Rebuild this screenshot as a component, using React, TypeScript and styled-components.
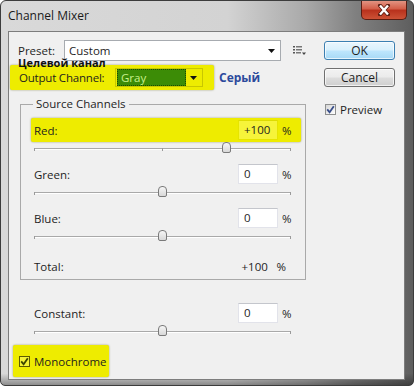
import styled, { createGlobalStyle } from "styled-components";

const GlobalStyle = createGlobalStyle`
  html, body {
    margin: 0;
    padding: 0;
  }
  body {
    width: 414px;
    height: 386px;
    overflow: hidden;
    background: #ffffff;
    font-family: "Open Sans", "Noto Sans", sans-serif;
    font-size: 11.5px;
    color: #1e1e1e;
  }
`;

const Window = styled.div`
  box-sizing: border-box;
  width: 414px;
  height: 386px;
  display: flex;
  flex-direction: column;
  border: 1px solid #3c3c3c;
  border-radius: 6px 6px 5px 5px;
  overflow: hidden;
  background:
    linear-gradient(180deg, rgba(0, 0, 0, 0) 97%, rgba(0, 0, 0, 0.35) 100%),
    linear-gradient(90deg, #d9d9d9 0%, #d3d3d3 55%, #a9a9a9 74%, #808080 86%, #5e5e5e 100%);
`;

const TitleBar = styled.div`
  height: 30px;
  flex-shrink: 0;
  display: flex;
  align-items: flex-start;
  justify-content: space-between;
  padding: 0 6px 0 7px;
`;

const Title = styled.span`
  line-height: 30px;
  font-size: 12px;
  color: #1a1a1a;
`;

const CloseButton = styled.div`
  box-sizing: border-box;
  width: 46px;
  height: 20px;
  margin-top: -1px;
  display: flex;
  align-items: center;
  justify-content: center;
  border: 1px solid #5b1d12;
  border-top: none;
  border-radius: 0 0 5px 5px;
  background: linear-gradient(180deg, #e49a89 0%, #d4604a 45%, #b9321d 55%, #cc5236 100%);
`;

const Client = styled.div`
  flex: 1;
  margin: 0 8px 5px 7px;
  border: 1px solid #7d7d7d;
  background: #f0f0f0;
  display: flex;
`;

const LeftPane = styled.div`
  width: 315px;
  display: flex;
  flex-direction: column;
`;

const RightPane = styled.div`
  display: flex;
  flex-direction: column;
  padding-top: 9px;
`;

const PresetRow = styled.div`
  display: flex;
  align-items: center;
  height: 21px;
  margin: 8px 0 0 9px;
`;

const PresetLabel = styled.span`
  width: 46px;
  line-height: 14px;
`;

const Combo = styled.div<{ $width: number; $height: number; $flat?: boolean }>`
  box-sizing: border-box;
  flex-shrink: 0;
  width: ${(p) => p.$width}px;
  height: ${(p) => p.$height}px;
  display: flex;
  align-items: center;
  justify-content: space-between;
  padding: 0 5px 0 4px;
  line-height: 14px;
  border: 1px solid ${(p) => (p.$flat ? "#c9c700" : "#a7abb0")};
  background: ${(p) => (p.$flat ? "transparent" : "#ffffff")};
`;

const MenuButton = styled.span`
  display: flex;
  margin-left: 12px;
`;

const Caption = styled.div`
  position: relative;
  z-index: 1;
  margin: -2px 0 0 9px;
  line-height: 8px;
  font-size: 11px;
  font-weight: 700;
  color: #111;
`;

const OutputRow = styled.div`
  display: flex;
  align-items: center;
  margin: -2px 0 0 1px;
`;

const Highlight = styled.div<{ $width: number; $height: number }>`
  box-sizing: border-box;
  width: ${(p) => p.$width}px;
  height: ${(p) => p.$height}px;
  display: flex;
  align-items: center;
  background: #eeec00;
  border-radius: 2px;
  box-shadow: 0 0 2px rgba(90, 90, 0, 0.6);
`;

const OutputLabel = styled.span`
  flex-shrink: 0;
  width: 105px;
  padding-left: 9px;
  box-sizing: border-box;
  white-space: nowrap;
  letter-spacing: -0.2px;
`;

const GraySwatch = styled.span`
  box-sizing: border-box;
  width: 69px;
  height: 17px;
  margin-left: -3px;
  padding-left: 3px;
  line-height: 15px;
  background: #3c8c06;
  border: 1px dotted #1c4a00;
  color: #c9f08c;
`;

const RussianLabel = styled.span`
  margin-left: 5px;
  font-size: 12px;
  font-weight: 700;
  color: #2c4a9c;
`;

const GroupBox = styled.fieldset`
  box-sizing: border-box;
  width: 286px;
  height: 183px;
  margin: 7px 0 0 11px;
  padding: 0;
  min-width: 0;
  border: 1px solid #a9a9a9;
`;

const Legend = styled.legend`
  margin-left: 12px;
  padding: 0 3px;
  line-height: 14px;
`;

const ChannelBlock = styled.div<{ $left: number; $top: number }>`
  margin: ${(p) => p.$top}px 0 0 ${(p) => p.$left}px;
  display: flex;
  flex-direction: column;
`;

const Row = styled.div<{ $hl?: boolean; $right?: number }>`
  box-sizing: border-box;
  width: 270px;
  height: 24px;
  display: flex;
  align-items: center;
  padding: 0 ${(p) => p.$right ?? 9}px 0 3px;
  border-radius: 2px;
  background: ${(p) => (p.$hl ? "#eeec00" : "transparent")};
  box-shadow: ${(p) => (p.$hl ? "0 0 2px rgba(90, 90, 0, 0.6)" : "none")};
`;

const RowLabel = styled.span`
  flex: 1;
`;

const NumField = styled.span<{ $hl?: boolean }>`
  box-sizing: border-box;
  width: 40px;
  height: 20px;
  padding-left: 5px;
  line-height: 18px;
  border: 1px solid ${(p) => (p.$hl ? "#e6e400" : "#e2e3ea")};
  border-top-color: ${(p) => (p.$hl ? "#dedc00" : "#c4c6cc")};
  background: ${(p) => (p.$hl ? "#f6f43a" : "#ffffff")};
`;

const TotalValue = styled.span`
  width: 35px;
`;

const Percent = styled.span`
  width: 10px;
  margin-left: 4px;
`;

const Slider = styled.div`
  position: relative;
  width: 257px;
  height: 12px;
  margin-left: 3px;
  &::before {
    content: "";
    position: absolute;
    left: 0;
    right: 0;
    top: 6px;
    height: 1px;
    background: #a9a9a9;
    box-shadow: 0 1px 0 #ffffff;
  }
`;

const Tick = styled.span<{ $pos: number }>`
  position: absolute;
  top: 6px;
  left: ${(p) => p.$pos}px;
  width: 1px;
  height: 3px;
  background: #9a9a9a;
`;

const Thumb = styled.span`
  position: absolute;
  top: 0;
  box-sizing: border-box;
  width: 9px;
  height: 11px;
  margin-left: -4px;
  border: 1px solid #7a7a7a;
  border-radius: 4px 4px 2px 2px;
  background: linear-gradient(180deg, #f6f6f6 0%, #d8d8d8 100%);
`;

const MonoBox = styled(Highlight)`
  margin: 8px 0 0 4px;
  padding-left: 6px;
  gap: 4px;
`;

const CheckBox = styled.span<{ $hl?: boolean }>`
  box-sizing: border-box;
  width: 11px;
  height: 11px;
  display: flex;
  align-items: center;
  justify-content: center;
  border: 1px solid ${(p) => (p.$hl ? "#5c5a00" : "#8e8f8f")};
  background: ${(p) =>
    p.$hl ? "#f4f236" : "linear-gradient(135deg, #d6d6d6 0%, #ffffff 100%)"};
`;

const Button = styled.div<{ $primary?: boolean }>`
  box-sizing: border-box;
  width: 71px;
  height: 19px;
  display: flex;
  align-items: center;
  justify-content: center;
  border-radius: 3px;
  font-size: 12px;
  border: 1px solid ${(p) => (p.$primary ? "#3c7fb1" : "#707070")};
  background: ${(p) =>
    p.$primary
      ? "linear-gradient(180deg, #eaf6fd 0%, #d9f0fc 48%, #bee6fd 52%, #a7d9f5 100%)"
      : "linear-gradient(180deg, #f2f2f2 0%, #ebebeb 48%, #dddddd 52%, #cfcfcf 100%)"};
  box-shadow: inset 0 0 0 1px rgba(255, 255, 255, 0.7);
  & + & {
    margin-top: 8px;
  }
`;

const PreviewRow = styled.div`
  display: flex;
  align-items: center;
  gap: 4px;
  height: 14px;
  margin: 15px 0 0 1px;
`;

const Arrow = () => (
  <svg width="7" height="4" viewBox="0 0 7 4">
    <path d="M0 0H7L3.5 4Z" fill="#111" />
  </svg>
);

const Check = ({ color }: { color: string }) => (
  <svg width="9" height="9" viewBox="0 0 9 9">
    <path d="M1.2 4.4L3.6 7.2L7.8 1.2" fill="none" stroke={color} strokeWidth="1.8" />
  </svg>
);

const CloseIcon = () => (
  <svg width="14" height="12" viewBox="0 0 14 12">
    <path
      d="M3 1.5L11 10.5M11 1.5L3 10.5"
      fill="none"
      stroke="#5b1d12"
      strokeWidth="4"
      strokeLinecap="round"
    />
    <path d="M3 1.5L11 10.5M11 1.5L3 10.5" fill="none" stroke="#ffffff" strokeWidth="2.4" />
  </svg>
);

const MenuIcon = () => (
  <svg width="13" height="9" viewBox="0 0 13 9">
    <rect x="0" y="0" width="2" height="1.5" fill="#555" />
    <rect x="3" y="0" width="6" height="1.5" fill="#777" />
    <rect x="0" y="3" width="2" height="1.5" fill="#555" />
    <rect x="3" y="3" width="6" height="1.5" fill="#777" />
    <rect x="0" y="6" width="2" height="1.5" fill="#555" />
    <rect x="3" y="6" width="5" height="1.5" fill="#777" />
    <path d="M9 6.5H13L11 9Z" fill="#444" />
  </svg>
);

const SLIDER_WIDTH = 257;

const ChannelSlider = ({ value }: { value: number }) => {
  const pos = Math.round(((value + 200) / 400) * (SLIDER_WIDTH - 1));
  return (
    <Slider>
      <Tick $pos={0} />
      <Tick $pos={128} />
      <Tick $pos={SLIDER_WIDTH - 1} />
      <Thumb style={{ left: pos }} />
    </Slider>
  );
};

const channels = [
  { name: "Red", value: 100, hl: true, top: 7 },
  { name: "Green", value: 0, hl: false, top: 8 },
  { name: "Blue", value: 0, hl: false, top: 8 },
];

const formatValue = (v: number) => (v > 0 ? `+${v}` : `${v}`);

export default function App() {
  return (
    <>
      <GlobalStyle />
      <Window>
        <TitleBar>
          <Title>Channel Mixer</Title>
          <CloseButton>
            <CloseIcon />
          </CloseButton>
        </TitleBar>
        <Client>
          <LeftPane>
            <PresetRow>
              <PresetLabel>Preset:</PresetLabel>
              <Combo $width={217} $height={21}>
                <span>Custom</span>
                <Arrow />
              </Combo>
              <MenuButton>
                <MenuIcon />
              </MenuButton>
            </PresetRow>
            <Caption>Целевой канал</Caption>
            <OutputRow>
              <Highlight $width={204} $height={25}>
                <OutputLabel>Output Channel:</OutputLabel>
                <Combo $width={88} $height={19} $flat>
                  <GraySwatch>Gray</GraySwatch>
                  <Arrow />
                </Combo>
              </Highlight>
              <RussianLabel>Серый</RussianLabel>
            </OutputRow>

            <GroupBox>
              <Legend>Source Channels</Legend>
              {channels.map((c) => (
                <ChannelBlock key={c.name} $left={10} $top={c.top}>
                  <Row $hl={c.hl}>
                    <RowLabel>{c.name}:</RowLabel>
                    <NumField $hl={c.hl}>{formatValue(c.value)}</NumField>
                    <Percent>%</Percent>
                  </Row>
                  <ChannelSlider value={c.value} />
                </ChannelBlock>
              ))}
              <ChannelBlock $left={10} $top={12}>
                <Row $right={15}>
                  <RowLabel>Total:</RowLabel>
                  <TotalValue>+100</TotalValue>
                  <span>%</span>
                </Row>
              </ChannelBlock>
            </GroupBox>

            <ChannelBlock $left={22} $top={21}>
              <Row>
                <RowLabel>Constant:</RowLabel>
                <NumField>0</NumField>
                <Percent>%</Percent>
              </Row>
              <ChannelSlider value={0} />
            </ChannelBlock>

            <MonoBox $width={96} $height={32}>
              <CheckBox $hl>
                <Check color="#3d4600" />
              </CheckBox>
              <span>Monochrome</span>
            </MonoBox>
          </LeftPane>

          <RightPane>
            <Button $primary>OK</Button>
            <Button>Cancel</Button>
            <PreviewRow>
              <CheckBox>
                <Check color="#3a4f8a" />
              </CheckBox>
              <span>Preview</span>
            </PreviewRow>
          </RightPane>
        </Client>
      </Window>
    </>
  );
}
